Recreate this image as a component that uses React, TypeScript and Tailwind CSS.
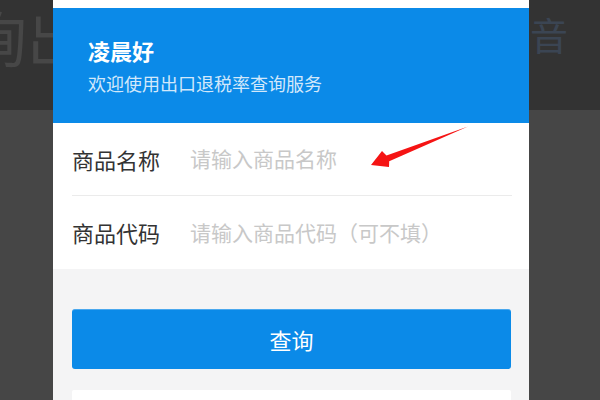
const font = { fontFamily: '"Noto Sans CJK SC", "Noto Sans", sans-serif' };

function Side({ children }: { children?: React.ReactNode }) {
  return (
    <div className="flex flex-col h-full overflow-hidden">
      <div className="h-[110px] shrink-0 bg-[#333333] flex overflow-hidden">{children}</div>
      <div className="flex-1 bg-[#464646]" />
    </div>
  );
}

function Field({ label, placeholder, divider }: { label: string; placeholder: string; divider?: boolean }) {
  return (
    <div className={`flex items-center h-[73px] shrink-0 ${divider ? 'border-b border-[#ebebeb]' : ''}`}>
      <span className="w-[118px] shrink-0 text-[22px] text-[#333333]">{label}</span>
      <span className="text-[21px] text-[#c8c8c8] whitespace-nowrap">{placeholder}</span>
    </div>
  );
}

export default function App() {
  return (
    <div className="relative w-[600px] h-[400px] overflow-hidden flex" style={font}>
      <div className="w-[53px] shrink-0">
        <Side>
          <span className="text-[60px] leading-none mt-[6px] ml-[-33px] text-[#474747] whitespace-nowrap">询出</span>
        </Side>
      </div>

      <div className="w-[476px] shrink-0 flex flex-col bg-white pt-2">
        <div className="h-[115px] shrink-0 bg-[#0b8ae8] pl-[35px] pt-[26px] flex flex-col">
          <span className="text-[22px] leading-[32px] font-semibold text-white">凌晨好</span>
          <span className="text-[18px] leading-[26px] mt-[4px] text-[#d2e8fb]">欢迎使用出口退税率查询服务</span>
        </div>
        <div className="px-[19px] pr-[17px] shrink-0">
          <Field label="商品名称" placeholder="请输入商品名称" divider />
          <Field label="商品代码" placeholder="请输入商品代码（可不填）" />
        </div>
        <div className="flex-1 bg-[#f4f4f5] px-[19px] pr-[18px] pt-[40px] flex flex-col">
          <button className="h-[60px] shrink-0 w-full rounded-[3px] bg-[#0b8ae8] border-t border-[#4aa8ee] text-white text-[22px]">
            查询
          </button>
          <div className="mt-[21px] h-[40px] shrink-0 bg-white rounded-[2px]" />
        </div>
      </div>

      <div className="flex-1">
        <Side>
          <span className="text-[38px] leading-none mt-[15px] ml-[1px] text-[#3b4553] whitespace-nowrap">音</span>
        </Side>
      </div>

      <svg className="absolute left-0 top-0 pointer-events-none" width="600" height="400" viewBox="0 0 600 400">
        <polygon
          points="371,165 382,151 386.5,155.4 468,126.5 389.2,161.3 389,167"
          fill="#f51414"
        />
      </svg>
    </div>
  );
}
